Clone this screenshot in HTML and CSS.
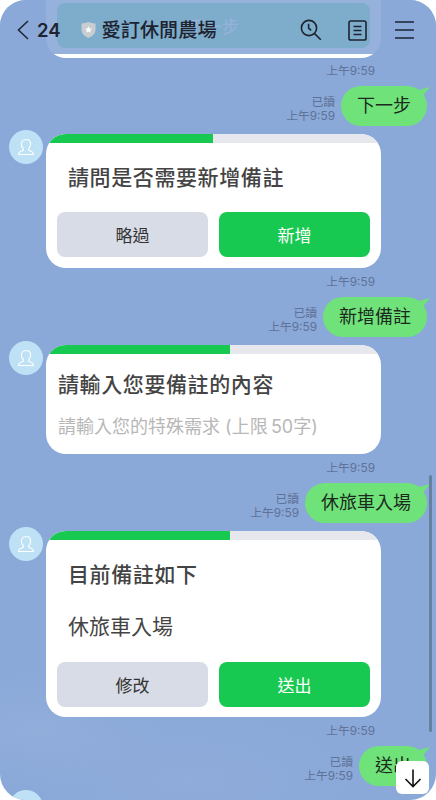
FILE: index.html
```html
<!DOCTYPE html>
<html lang="zh-Hant">
<head>
<meta charset="utf-8">
<title>愛訂休閒農場</title>
<link rel="stylesheet" href="styles.css">
</head>
<body>
<div class="phone">
  <main class="chat">
    <div class="card card-clipped">
      <button class="btn btn-green btn-full">下一步</button>
    </div>
    <div class="time time-first">上午9:59</div>
    <div class="out">
      <div class="receipt"><span>已讀</span><span>上午9:59</span></div>
      <div class="bubble">下一步</div>
    </div>

    <div class="in">
      <div class="avatar"><svg viewBox="0 0 34 34"><path d="M17 9.500c-2.900 0-4.600 2.100-4.600 4.700 0 1.900.8 3.400 1.900 4.400v1.600c-1.600 1-4.600 1.300-4.600 3.400v.9h14.600v-.9c0-2.100-3-2.400-4.600-3.400v-1.600c1.100-1 1.900-2.500 1.900-4.400 0-2.600-1.700-4.700-4.600-4.700z"/></svg></div>
      <div class="card">
        <div class="track"><div class="fill fill-half"></div></div>
        <h2 class="title title-a">請問是否需要新增備註</h2>
        <div class="actions">
          <button class="btn btn-gray">略過</button>
          <button class="btn btn-green">新增</button>
        </div>
      </div>
    </div>
    <div class="time">上午9:59</div>
    <div class="out">
      <div class="receipt"><span>已讀</span><span>上午9:59</span></div>
      <div class="bubble">新增備註</div>
    </div>

    <div class="in">
      <div class="avatar"><svg viewBox="0 0 34 34"><path d="M17 9.500c-2.900 0-4.600 2.100-4.600 4.700 0 1.900.8 3.400 1.900 4.400v1.600c-1.600 1-4.600 1.300-4.600 3.400v.9h14.600v-.9c0-2.100-3-2.400-4.600-3.400v-1.600c1.100-1 1.900-2.500 1.900-4.400 0-2.600-1.700-4.700-4.600-4.700z"/></svg></div>
      <div class="card">
        <div class="track"><div class="fill fill-more"></div></div>
        <h2 class="title title-b">請輸入您要備註的內容</h2>
        <p class="placeholder">請輸入您的特殊需求 (上限&#8201;50字)</p>
      </div>
    </div>
    <div class="time">上午9:59</div>
    <div class="out">
      <div class="receipt"><span>已讀</span><span>上午9:59</span></div>
      <div class="bubble">休旅車入場</div>
    </div>

    <div class="in">
      <div class="avatar"><svg viewBox="0 0 34 34"><path d="M17 9.500c-2.900 0-4.600 2.100-4.600 4.700 0 1.900.8 3.400 1.900 4.400v1.600c-1.600 1-4.600 1.300-4.600 3.400v.9h14.600v-.9c0-2.100-3-2.400-4.600-3.400v-1.600c1.100-1 1.900-2.500 1.900-4.400 0-2.600-1.700-4.700-4.600-4.700z"/></svg></div>
      <div class="card">
        <div class="track"><div class="fill fill-more"></div></div>
        <h2 class="title title-a">目前備註如下</h2>
        <p class="note">休旅車入場</p>
        <div class="actions">
          <button class="btn btn-gray">修改</button>
          <button class="btn btn-green">送出</button>
        </div>
      </div>
    </div>
    <div class="time">上午9:59</div>
    <div class="out">
      <div class="receipt"><span>已讀</span><span>上午9:59</span></div>
      <div class="bubble">送出</div>
    </div>

    <div class="in">
      <div class="avatar"></div>
    </div>
  </main>

  <header class="topbar">
    <svg class="chevron" viewBox="0 0 12 20"><path d="M11 1 1.500 10 11 19"/></svg>
    <span class="count">24</span>
    <svg class="shield" viewBox="0 0 16 17"><path class="shield-body" d="M8 0c2.200 1 4.800 1.500 7.500 1.500v6.500c0 4.200-3.400 7.400-7.500 9-4.100-1.600-7.500-4.800-7.500-9V1.500C3.200 1.500 5.800 1 8 0z"/><path class="shield-star" d="m8 4.500 1.100 2.300 2.500.3-1.800 1.700.5 2.500L8 10.100l-2.300 1.200.5-2.500-1.800-1.700 2.500-.3z"/></svg>
    <h1 class="chat-name">愛訂休閒農場</h1>
    <div class="tools">
      <svg class="tool tool-search" viewBox="0 0 22 22"><circle cx="9" cy="9" r="7.600"/><path d="M8.600 4.800v4.400l2.600 2.200M14.600 14.600l6.200 6.200"/></svg>
      <svg class="tool tool-note" viewBox="0 0 19 21"><rect x="1" y="1" width="17" height="19" rx="1.800"/><path d="M5.500 6.500h8M5.500 10.500h8M5.500 14.500h8"/></svg>
      <svg class="tool tool-menu" viewBox="0 0 19 18"><path d="M0 1h19M0 9h19M0 17h19"/></svg>
    </div>
  </header>

  <div class="scrollbar"></div>
  <button class="down" aria-label="捲動到底部"><svg viewBox="0 0 20 20"><path d="M10 1.500v17M2.500 11 10 18.500 17.500 11"/></svg></button>
</div>
</body>
</html>
```

FILE: styles.css
```css
* { box-sizing: border-box; }
html, body { margin: 0; padding: 0; background: #fff; }
body { width: 436px; height: 800px; overflow: hidden; font-family: Inter, "Noto Sans CJK TC", sans-serif; }

.phone {
  position: relative;
  width: 436px;
  height: 800px;
  overflow: hidden;
  border-radius: 26px;
  background:
    radial-gradient(ellipse 130px 60px at 40px 730px, rgba(170, 195, 230, .22), transparent 100%),
    radial-gradient(ellipse 170px 70px at 190px 780px, rgba(165, 190, 228, .18), transparent 100%),
    #8aa8d8;
}

.chat { display: flex; flex-direction: column; align-items: stretch; }

.time {
  height: 14px;
  margin: 7px 61px 8px 0;
  font-size: 11.800px;
  line-height: 14px;
  text-align: right;
  color: #5f7297;
}
.time-first { margin-top: 6px; }

.out { display: flex; justify-content: flex-end; align-items: flex-end; gap: 6px; padding-right: 9px; }
.receipt { display: flex; flex-direction: column; align-items: flex-end; font-size: 11.800px; line-height: 14px; color: #5f7297; padding-bottom: 3px; }
.bubble {
  position: relative;
  height: 40px;
  padding: 0 16px;
  border-radius: 20px;
  background: #6fe37a;
  font-size: 18px;
  line-height: 40px;
  color: #1c2a1e;
}
.bubble::after {
  content: "";
  position: absolute;
  top: 1px;
  right: -3px;
  width: 14px;
  height: 11px;
  background: #6fe37a;
  clip-path: polygon(100% 0, 0 35%, 35% 100%);
}

.in { display: flex; align-items: flex-start; gap: 3px; padding-left: 9px; margin-top: 4px; }
.avatar { flex: none; width: 34px; height: 34px; border-radius: 50%; background: #bfe1f6; }
.avatar svg { display: block; width: 34px; height: 34px; fill: none; stroke: #fff; stroke-width: 1.100; }

.card {
  width: 335px;
  margin-top: 4px;
  border-radius: 20px;
  overflow: hidden;
  background: #fff;
}
.card-clipped { height: 58px; margin: 0 0 0 46px; padding: 3px 11px 0; border-radius: 0 0 20px 20px; }

.track { height: 9px; background: #e6e8ee; }
.fill { height: 100%; background: #17c950; }
.fill-half { width: 167px; }
.fill-more { width: 184px; }

.title { margin: 0; font-size: 21px; font-weight: 500; line-height: 30px; letter-spacing: .6px; color: #444; }
.title-a { margin-top: 20px; padding-left: 22px; }
.title-b { margin-top: 16px; padding-left: 12px; }

.placeholder { margin: 13px 0 14px; padding-left: 12px; font-size: 18px; line-height: 27px; color: #b7b7b7; white-space: nowrap; }
.note { margin: 22px 0 0; padding-left: 22px; font-size: 21px; line-height: 30px; color: #444; }

.actions { display: flex; gap: 11px; padding: 19px 11px 11px; }
.note + .actions { padding-top: 20px; padding-bottom: 10px; }
.btn {
  flex: 1;
  height: 45px;
  border: 0;
  border-radius: 8px;
  font-family: inherit;
  font-size: 17px;
}
.btn-gray { background: #d8dce6; color: #333; }
.btn-green { background: #17c950; color: #fff; }
.btn-full { display: block; width: 100%; }

.topbar {
  position: absolute;
  top: 0;
  left: 0;
  width: 100%;
  height: 54px;
  display: flex;
  align-items: center;
  padding: 6px 22px 0 17px;
  background: rgba(138, 168, 216, .9);
}
.chevron { width: 12px; height: 20px; flex: none; fill: none; stroke: #1d2330; stroke-width: 1.500; }
.count { margin-left: 8px; font-size: 18.500px; font-weight: 600; color: #1d2330; }
.shield { width: 15px; height: 16px; margin-left: 20px; flex: none; }
.shield-body { fill: #c9ccd0; }
.shield-star { fill: #fff; }
.chat-name { margin: 0 0 0 6px; font-size: 19.200px; font-weight: 500; line-height: 26px; color: #1d2330; white-space: nowrap; }
.tools { margin-left: auto; display: flex; align-items: center; }
.tool { display: block; flex: none; fill: none; stroke: #1d2330; stroke-width: 1.600; }
.tool-search { width: 22px; height: 22px; }
.tool-note { width: 19px; height: 21px; margin: 0 28px 0 26px; }
.tool-menu { width: 19px; height: 18px; }

.scrollbar {
  position: absolute;
  top: 475px;
  left: 429px;
  width: 3px;
  height: 257px;
  border-radius: 2px;
  background: #66809f;
}

.down {
  position: absolute;
  top: 761px;
  left: 396px;
  width: 33px;
  height: 33px;
  padding: 0;
  border: 0;
  border-radius: 6px;
  display: flex;
  align-items: center;
  justify-content: center;
  background: #fff;
}
.down svg { width: 20px; height: 20px; fill: none; stroke: #111; stroke-width: 1.600; }
```
